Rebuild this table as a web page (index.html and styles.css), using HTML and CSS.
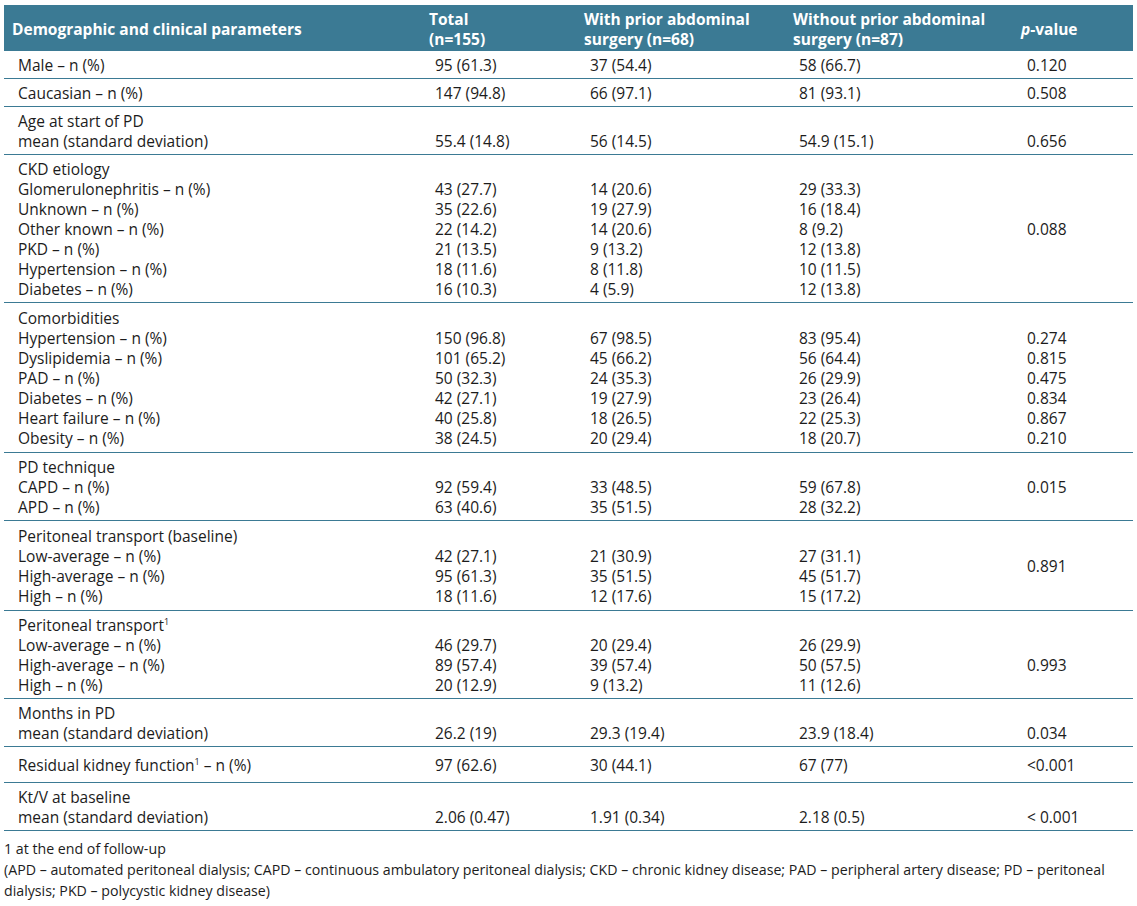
FILE: index.html
```html
<!DOCTYPE html>
<html lang="en">
<head>
<meta charset="utf-8">
<title>Demographic and clinical parameters</title>
<link rel="stylesheet" href="styles.css">
</head>
<body>
<div class="page">
<table class="data">
  <colgroup>
    <col class="c1"><col class="c2"><col class="c3"><col class="c4"><col class="c5">
  </colgroup>
  <thead>
    <tr>
      <th class="mid">Demographic and clinical parameters</th>
      <th>Total<br>(n=155)</th>
      <th>With prior abdominal<br>surgery (n=68)</th>
      <th>Without prior abdominal<br>surgery (n=87)</th>
      <th class="mid"><i>p</i>-value</th>
    </tr>
  </thead>
  <tbody>
    <tr>
      <td>Male – n (%)</td><td>95 (61.3)</td><td>37 (54.4)</td><td>58 (66.7)</td><td>0.120</td>
    </tr>
    <tr>
      <td>Caucasian – n (%)</td><td>147 (94.8)</td><td>66 (97.1)</td><td>81 (93.1)</td><td>0.508</td>
    </tr>
    <tr>
      <td>Age at start of PD<br>mean (standard deviation)</td><td><br>55.4 (14.8)</td><td><br>56 (14.5)</td><td><br>54.9 (15.1)</td><td><br>0.656</td>
    </tr>
    <tr>
      <td>CKD etiology<br>Glomerulonephritis – n (%)<br>Unknown – n (%)<br>Other known – n (%)<br>PKD – n (%)<br>Hypertension – n (%)<br>Diabetes – n (%)</td>
      <td><br>43 (27.7)<br>35 (22.6)<br>22 (14.2)<br>21 (13.5)<br>18 (11.6)<br>16 (10.3)</td>
      <td><br>14 (20.6)<br>19 (27.9)<br>14 (20.6)<br>9 (13.2)<br>8 (11.8)<br>4 (5.9)</td>
      <td><br>29 (33.3)<br>16 (18.4)<br>8 (9.2)<br>12 (13.8)<br>10 (11.5)<br>12 (13.8)</td>
      <td class="mid">0.088</td>
    </tr>
    <tr class="tall">
      <td>Comorbidities<br>Hypertension – n (%)<br>Dyslipidemia – n (%)<br>PAD – n (%)<br>Diabetes – n (%)<br>Heart failure – n (%)<br>Obesity – n (%)</td>
      <td><br>150 (96.8)<br>101 (65.2)<br>50 (32.3)<br>42 (27.1)<br>40 (25.8)<br>38 (24.5)</td>
      <td><br>67 (98.5)<br>45 (66.2)<br>24 (35.3)<br>19 (27.9)<br>18 (26.5)<br>20 (29.4)</td>
      <td><br>83 (95.4)<br>56 (64.4)<br>26 (29.9)<br>23 (26.4)<br>22 (25.3)<br>18 (20.7)</td>
      <td><br>0.274<br>0.815<br>0.475<br>0.834<br>0.867<br>0.210</td>
    </tr>
    <tr>
      <td>PD technique<br>CAPD – n (%)<br>APD – n (%)</td>
      <td><br>92 (59.4)<br>63 (40.6)</td>
      <td><br>33 (48.5)<br>35 (51.5)</td>
      <td><br>59 (67.8)<br>28 (32.2)</td>
      <td class="mid">0.015</td>
    </tr>
    <tr class="tall">
      <td>Peritoneal transport (baseline)<br>Low-average – n (%)<br>High-average – n (%)<br>High – n (%)</td>
      <td><br>42 (27.1)<br>95 (61.3)<br>18 (11.6)</td>
      <td><br>21 (30.9)<br>35 (51.5)<br>12 (17.6)</td>
      <td><br>27 (31.1)<br>45 (51.7)<br>15 (17.2)</td>
      <td class="mid">0.891</td>
    </tr>
    <tr>
      <td>Peritoneal transport<sup>1</sup><br>Low-average – n (%)<br>High-average – n (%)<br>High – n (%)</td>
      <td><br>46 (29.7)<br>89 (57.4)<br>20 (12.9)</td>
      <td><br>20 (29.4)<br>39 (57.4)<br>9 (13.2)</td>
      <td><br>26 (29.9)<br>50 (57.5)<br>11 (12.6)</td>
      <td><br><br>0.993</td>
    </tr>
    <tr>
      <td>Months in PD<br>mean (standard deviation)</td><td><br>26.2 (19)</td><td><br>29.3 (19.4)</td><td><br>23.9 (18.4)</td><td><br>0.034</td>
    </tr>
    <tr class="roomy">
      <td>Residual kidney function<sup>1</sup> – n (%)</td><td>97 (62.6)</td><td>30 (44.1)</td><td>67 (77)</td><td>&lt;0.001</td>
    </tr>
    <tr>
      <td>Kt/V at baseline<br>mean (standard deviation)</td><td><br>2.06 (0.47)</td><td><br>1.91 (0.34)</td><td><br>2.18 (0.5)</td><td><br>&lt; 0.001</td>
    </tr>
  </tbody>
</table>
<div class="notes">
  <p>1 at the end of follow-up</p>
  <p>(APD – automated peritoneal dialysis; CAPD – continuous ambulatory peritoneal dialysis; CKD – chronic kidney disease; PAD – peripheral artery disease; PD – peritoneal<br>dialysis; PKD – polycystic kidney disease)</p>
</div>
</div>
</body>
</html>
```

FILE: styles.css
```css
html, body {
  margin: 0;
  padding: 0;
  background: #ffffff;
}

body {
  font-family: "Open Sans", "Noto Sans", sans-serif;
  color: #1c1c1c;
  font-size: 15.5px;
  line-height: 20px;
}

.page {
  padding: 5px 4px 0 4px;
  width: 1129px;
}

.data {
  border-collapse: collapse;
  width: 1129px;
  table-layout: fixed;
}

.c1 { width: 417px; }
.c2 { width: 155px; }
.c3 { width: 209px; }
.c4 { width: 228px; }
.c5 { width: 120px; }

.data th {
  background: #3b7a94;
  color: #ffffff;
  font-weight: 700;
  text-align: left;
  padding: 4px 0 2px 8px;
  vertical-align: top;
  line-height: 20px;
  white-space: nowrap;
}

.data th.mid {
  vertical-align: middle;
}

.data td {
  padding: 4px 0 3px 14px;
  vertical-align: top;
  border-bottom: 1px solid #3b7a94;
  white-space: nowrap;
}

.data td.mid {
  vertical-align: middle;
}

.data tr.tall td {
  padding-top: 5px;
  padding-bottom: 4px;
}

.data tr.roomy td {
  padding-top: 8px;
  padding-bottom: 7px;
}

sup {
  font-size: 9px;
  line-height: 0;
  vertical-align: 6px;
}

.notes {
  padding: 7px 0 0 0;
  font-size: 14.2px;
  line-height: 21px;
}

.notes p {
  margin: 0;
}
```
